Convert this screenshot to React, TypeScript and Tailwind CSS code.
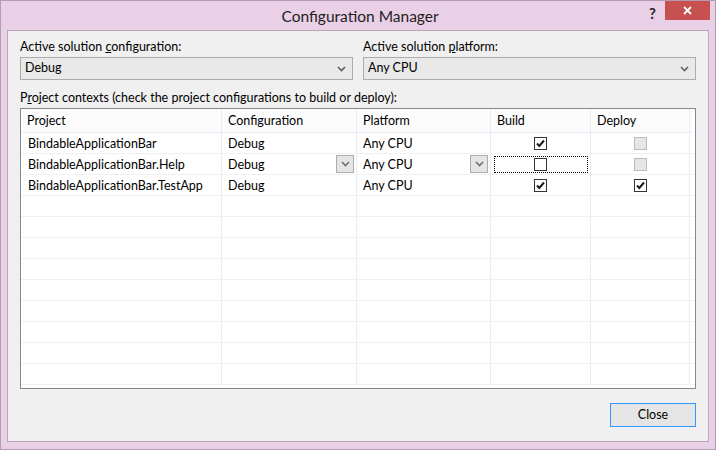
import React from "react";

const font = { fontFamily: 'Lato, "Noto Sans", sans-serif' };

function Chevron({ color = "#606060" }: { color?: string }) {
  return (
    <svg width="9" height="6" viewBox="0 0 9 6">
      <path d="M1 1 L4.5 4.5 L8 1" fill="none" stroke={color} strokeWidth="1.6" />
    </svg>
  );
}

function Check() {
  return (
    <svg width="11" height="11" viewBox="0 0 11 11">
      <path d="M2 5.5 L4.3 8 L9 2.5" fill="none" stroke="#1a1a1a" strokeWidth="2" />
    </svg>
  );
}

function Checkbox({ checked, disabled }: { checked?: boolean; disabled?: boolean }) {
  return (
    <div
      className={
        disabled
          ? "flex h-[13px] w-[13px] items-center justify-center border border-[#bcbcbc] bg-[#e6e6e6]"
          : "flex h-[13px] w-[13px] items-center justify-center border border-[#333333] bg-white"
      }
    >
      {checked && <Check />}
    </div>
  );
}

function Select({ value }: { value: string }) {
  return (
    <div className="flex h-[23px] items-center justify-between border border-[#acacac] bg-[#e9e9e9] pl-[4px] pr-[6px] text-[12.5px] text-black">
      <span>{value}</span>
      <Chevron />
    </div>
  );
}

function CellButton() {
  return (
    <div className="flex h-[18px] w-[18px] items-center justify-center border border-[#acacac] bg-[#e5e5e5]">
      <Chevron color="#707070" />
    </div>
  );
}

const cols = ["w-[201px]", "w-[135px]", "w-[134px]", "w-[100px]", "w-[99px]"];

type Row = {
  project: string;
  build: boolean;
  deploy: boolean;
  deployEnabled: boolean;
  active?: boolean;
};

const rows: Row[] = [
  { project: "BindableApplicationBar", build: true, deploy: false, deployEnabled: false },
  { project: "BindableApplicationBar.Help", build: false, deploy: false, deployEnabled: false, active: true },
  { project: "BindableApplicationBar.TestApp", build: true, deploy: true, deployEnabled: true },
];

function GridRow({ row }: { row?: Row }) {
  return (
    <div className="flex h-[21px] border-b border-[#f0f0f0] text-[12.5px] text-black">
      <div className={`${cols[0]} flex items-center border-r border-[#e6edf7] pl-[7px] pt-[3px]`}>{row?.project}</div>
      <div className={`${cols[1]} flex items-center justify-between border-r border-[#e6edf7] pl-[6px] pr-[2px]`}>
        <span className="pt-[3px]">{row ? "Debug" : ""}</span>
        {row?.active && <CellButton />}
      </div>
      <div className={`${cols[2]} flex items-center justify-between border-r border-[#e6edf7] pl-[6px] pr-[2px]`}>
        <span className="pt-[3px]">{row ? "Any CPU" : ""}</span>
        {row?.active && <CellButton />}
      </div>
      <div className={`${cols[3]} flex items-center justify-center border-r border-[#e6edf7]`}>
        {row && (
          <div
            className={
              row.active
                ? "flex h-[17px] w-[94px] items-center justify-center border border-dotted border-black"
                : "flex h-[17px] w-[94px] items-center justify-center"
            }
          >
            <Checkbox checked={row.build} />
          </div>
        )}
      </div>
      <div className={`${cols[4]} flex items-center justify-center border-r border-[#e6edf7]`}>
        {row && <Checkbox checked={row.deploy} disabled={!row.deployEnabled} />}
      </div>
    </div>
  );
}

export default function App() {
  const empty = Array.from({ length: 9 });
  return (
    <div
      className="flex h-[450px] w-[716px] flex-col overflow-hidden border border-[#b59db1] bg-[#e9d0e6]"
      style={font}
    >
      <div className="flex h-[29px] shrink-0 items-start">
        <div className="flex-1 pt-[4px] pl-[70px] text-center text-[15.5px] text-[#1e1e1e]">
          Configuration Manager
        </div>
        <div className="mr-[9px] pt-[1px] text-[15px] font-bold text-[#222]">?</div>
        <div className="mr-[5px] flex h-[19px] w-[45px] items-center justify-center bg-[#c75050]">
          <svg width="9" height="9" viewBox="0 0 9 9">
            <path d="M1 1 L8 8 M8 1 L1 8" stroke="white" strokeWidth="1.8" />
          </svg>
        </div>
      </div>

      <div className="mx-[6px] mb-[7px] flex flex-1 flex-col border border-[#b9a6b7] bg-[#f0f0f0] px-[12px] pt-[8px]">
        <div className="grid grid-cols-2 gap-[10px]">
          <div>
            <div className="mb-[2px] h-[16px] text-[12.5px] leading-[16px] text-black">
              Active solution <span className="underline">c</span>onfiguration:
            </div>
            <Select value="Debug" />
          </div>
          <div>
            <div className="mb-[2px] h-[16px] text-[12.5px] leading-[16px] text-black">
              Active solution <span className="underline">p</span>latform:
            </div>
            <Select value="Any CPU" />
          </div>
        </div>

        <div className="mt-[10px] h-[18px] text-[12.5px] leading-[16px] text-black">
          P<span className="underline">r</span>oject contexts (check the project configurations to build or deploy):
        </div>

        <div className="h-[281px] overflow-hidden border border-[#828790] bg-white">
          <div className="flex h-[24px] w-[672px] border-b border-[#e6edf7] bg-[#fcfcfc] text-[12.5px] text-black">
            {["Project", "Configuration", "Platform", "Build", "Deploy"].map((h, i) => (
              <div key={h} className={`${cols[i]} flex items-center border-r border-[#e6edf7] pl-[6px] pt-[2px]`}>
                {h}
              </div>
            ))}
          </div>
          {rows.map((r) => (
            <GridRow key={r.project} row={r} />
          ))}
          {empty.map((_, i) => (
            <GridRow key={i} />
          ))}
        </div>

        <div className="mt-[14px] flex justify-end">
          <button className="h-[24px] w-[86px] border border-[#3399ff] bg-[#e5e5e5] text-[12.5px] text-black">
            Close
          </button>
        </div>
      </div>
    </div>
  );
}
